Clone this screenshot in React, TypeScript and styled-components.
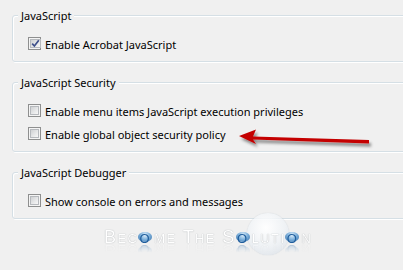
import React from 'react';
import styled, { createGlobalStyle } from 'styled-components';

const Global = createGlobalStyle`
  html, body { margin: 0; padding: 0; background: #f0f0f0; }
  body {
    width: 403px; height: 270px; overflow: hidden;
    font-family: "Noto Sans", "Open Sans", sans-serif;
    font-size: 11px; color: #000;
  }
`;

const Page = styled.div`
  position: relative;
  width: 403px;
  height: 270px;
  box-sizing: border-box;
  padding: 8px 0 0 12px;
  display: flex;
  flex-direction: column;
  gap: 13px;
  overflow: hidden;
`;

const Group = styled.fieldset`
  margin: 0 -20px 0 0;
  padding: 14px 0 11px 5px;
  border: 1px solid #d5dfe5;
  border-radius: 3px;
  box-shadow: inset 1px 1px 0 #fff, 1px 1px 0 #fff;
  min-width: 0;
  display: flex;
  flex-direction: column;
  gap: 10px;
`;

const Legend = styled.legend`
  padding: 0 3px;
  line-height: 15px;
  height: 15px;
  background: #f0f0f0;
  color: #000;
`;

const Row = styled.label`
  display: flex;
  align-items: center;
  gap: 4px;
  height: 13px;
  margin-left: 10px;
  line-height: 13px;
  white-space: nowrap;
`;

const Box = styled.span`
  width: 13px;
  height: 13px;
  box-sizing: border-box;
  flex: none;
  border: 1px solid #8e8f8f;
  background: #f4f4f4;
  padding: 1px;
  display: flex;
`;

const BoxInner = styled.span`
  flex: 1;
  border: 1px solid #b6b9bd;
  background: linear-gradient(135deg, #cfd1d3 0%, #e6e7e8 55%, #f7f7f7 100%);
  display: flex;
  align-items: center;
  justify-content: center;
`;

const Text = styled.span`
  padding-top: 1px;
`;

const Arrow = styled.svg`
  position: absolute;
  left: 234px;
  top: 124px;
  overflow: visible;
`;

const Watermark = styled.div`
  position: relative;
  margin: -3px 0 0 92px;
  width: 215px;
  height: 30px;
`;

const Bubble = styled.span`
  position: absolute;
  left: 143px;
  top: -16px;
  width: 42px;
  height: 42px;
  border-radius: 50%;
  background: radial-gradient(circle at 45% 35%, rgba(255,255,255,0.95) 0%, rgba(238,242,246,0.75) 55%, rgba(200,210,222,0.6) 100%);
  box-shadow: 0 0 1px rgba(180,190,200,0.8);
`;

const Mark = styled.div`
  position: relative;
  font-family: "Liberation Sans", Arial, sans-serif;
  font-variant: small-caps;
  font-size: 18px;
  letter-spacing: 1.4px;
  line-height: 16px;
  color: #fff;
  text-shadow: 0 0 1px rgba(140,145,150,0.9);
  white-space: nowrap;
  -webkit-box-reflect: below -2px linear-gradient(transparent 40%, rgba(0,0,0,0.35));
`;

const Ball = styled.span`
  color: #1f5d9c;
  text-shadow: none;
  display: inline-block;
  width: 14px;
  height: 10px;
  line-height: 10px;
  text-align: center;
  vertical-align: 0px;
  border-radius: 50%;
  background: radial-gradient(ellipse at 50% 30%, #e4f2fc 0%, #7fb2dc 45%, #2e6aa6 100%);
  margin-right: 2px;
`;

function Check({ checked }: { checked?: boolean }) {
  return (
    <Box>
      <BoxInner>
        {checked && (
          <svg width="9" height="9" viewBox="0 0 9 9">
            <path d="M1.2 4.6 L3.4 7 L7.8 1.3" fill="none" stroke="#3d4f8a" strokeWidth="1.7" strokeLinejoin="miter" />
          </svg>
        )}
      </BoxInner>
    </Box>
  );
}

function Item({ label, checked }: { label: string; checked?: boolean }) {
  return (
    <Row>
      <Check checked={checked} />
      <Text>{label}</Text>
    </Row>
  );
}

export default function App() {
  return (
    <>
      <Global />
      <Page>
        <Group>
          <Legend>JavaScript</Legend>
          <Item label="Enable Acrobat JavaScript" checked />
        </Group>
        <Group>
          <Legend>JavaScript Security</Legend>
          <Item label="Enable menu items JavaScript execution privileges" />
          <Item label="Enable global object security policy" />
        </Group>
        <Group>
          <Legend>JavaScript Debugger</Legend>
          <Item label="Show console on errors and messages" />
        </Group>
        <Watermark>
          <Bubble />
          <Mark>
            Bec<Ball>o</Ball>me The S<Ball>o</Ball>luti<Ball>o</Ball>n
          </Mark>
        </Watermark>
        <Arrow width="140" height="24" viewBox="0 0 140 24">
          <defs>
            <filter id="sh" x="-20%" y="-60%" width="140%" height="240%">
              <feDropShadow dx="2" dy="3" stdDeviation="1.4" floodColor="#000" floodOpacity="0.45" />
            </filter>
          </defs>
          <path
            d="M5 12 L22 5.5 L19 12.6 L135 16 L135 19.4 L19 15.6 L22 20 Z"
            fill="#c40000"
            filter="url(#sh)"
          />
        </Arrow>
      </Page>
    </>
  );
}
